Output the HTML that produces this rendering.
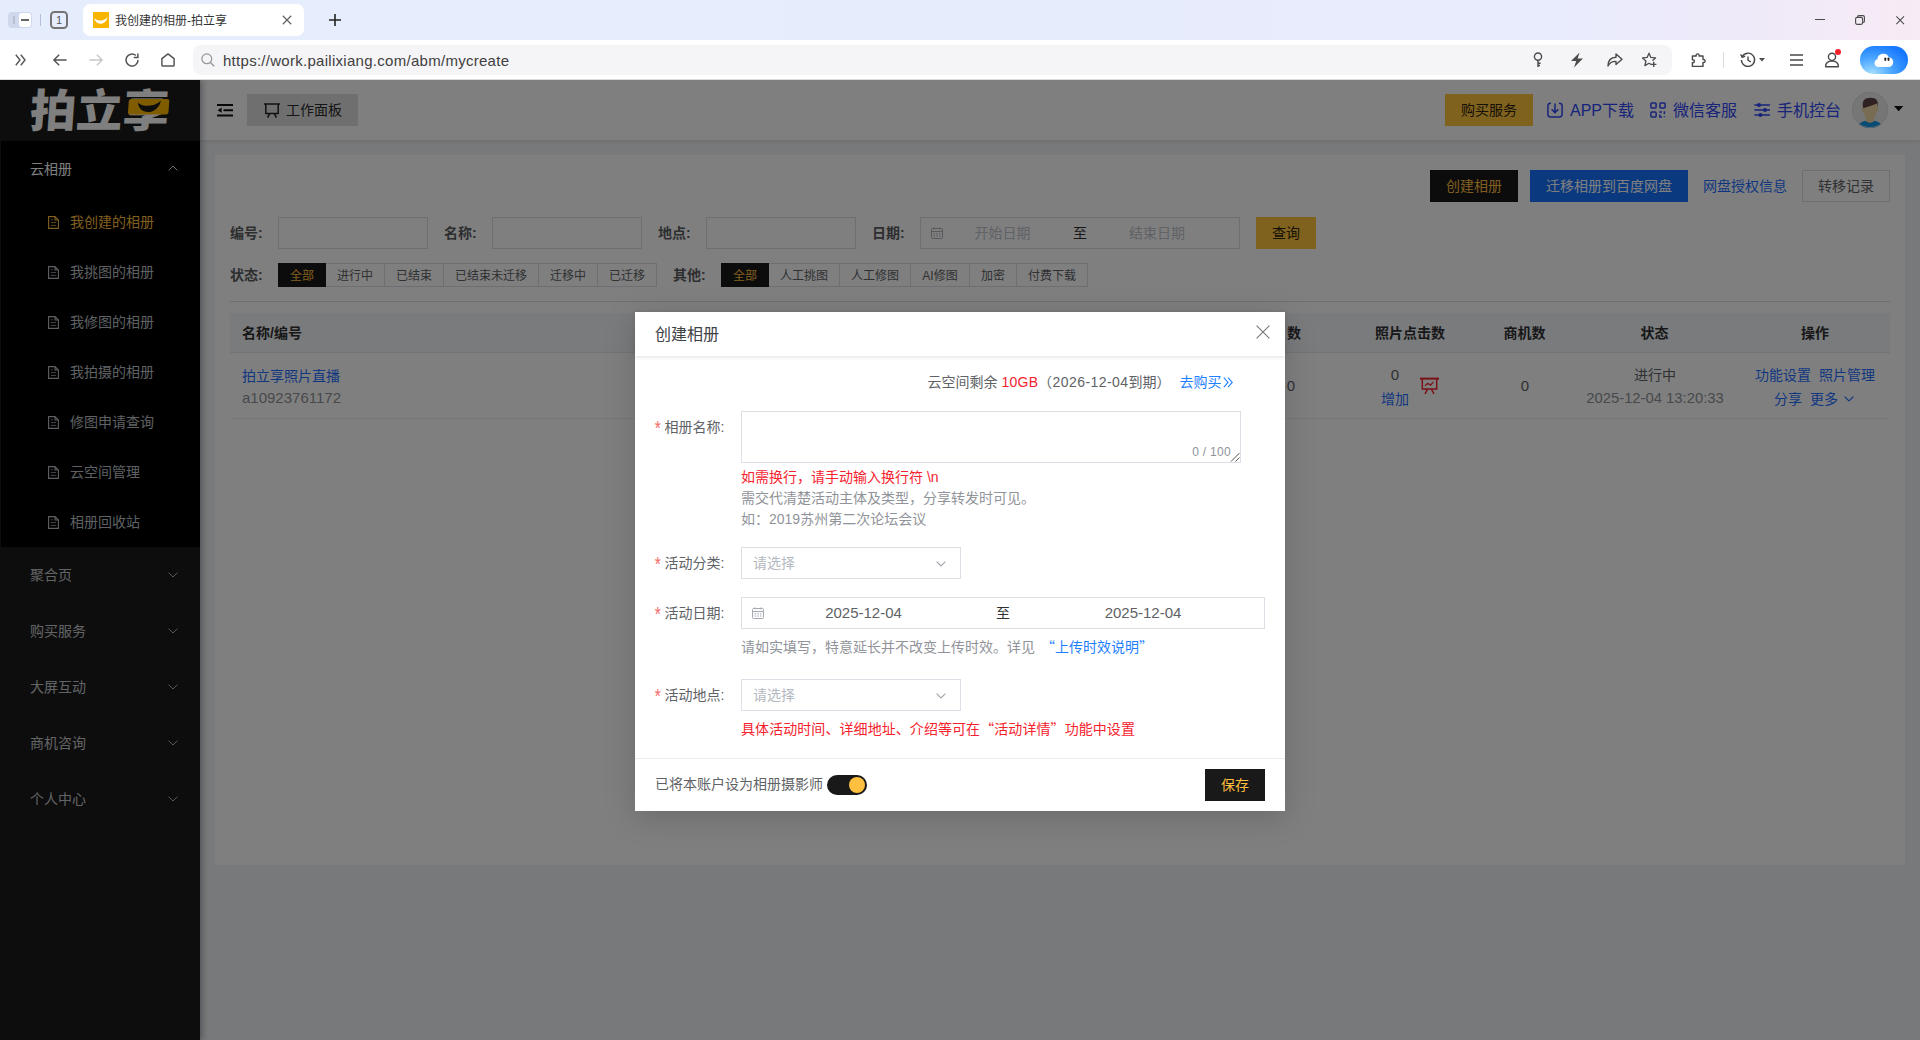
<!DOCTYPE html>
<html lang="zh-CN">
<head>
<meta charset="utf-8">
<title>我创建的相册-拍立享</title>
<style>
*{box-sizing:border-box;margin:0;padding:0}
html,body{width:1920px;height:1040px;overflow:hidden;background:#fff}
body{font-family:"Liberation Sans","Noto Sans CJK SC",sans-serif;font-size:14px;color:#303133;position:relative}
.a{position:absolute}
.t{position:absolute;white-space:nowrap;line-height:20px;height:20px}
.c{transform:translateX(-50%)}
svg{display:block;overflow:visible}
/* browser chrome */
#tabbar{left:0;top:0;width:1920px;height:40px;background:linear-gradient(90deg,#e5edfd 0%,#e8ecfd 80%,#eeeaf9 90%,#f7ebf5 100%)}
#tab{left:83px;top:4px;width:221px;height:32px;background:#fff;border-radius:7px}
#addr{left:0;top:40px;width:1920px;height:40px;background:#fff;border-bottom:1px solid #dcdcdc}
#url{left:193px;top:45px;width:1479px;height:30px;background:#f5f5f7;border-radius:8px}
/* app */
#side{left:0;top:80px;width:200px;height:960px;background:#1a1a1a;box-shadow:2px 0 6px rgba(0,21,41,.35)}
#sub{left:1px;top:141px;width:199px;height:406px;background:#000}
#main{left:200px;top:80px;width:1720px;height:960px;background:#f0f2f5}
#hdr{left:200px;top:80px;width:1720px;height:60px;background:#fff;box-shadow:0 1px 4px rgba(0,21,41,.12)}
#card{left:215px;top:155px;width:1690px;height:710px;background:#fff}
#mask{left:0;top:80px;width:1920px;height:960px;background:rgba(0,0,0,.5)}
.m1{font-size:14px;color:#c6c8cc}
.m2{font-size:14px;color:#bdc1c7}
.lbl{font-weight:bold;color:#5a5c60;font-size:14px}
.inp{position:absolute;height:32px;border:1px solid #dcdfe6;background:#fff}
.rb{position:absolute;top:263px;height:24px;border:1px solid #dcdfe6;border-left:0;font-size:12px;line-height:24px;text-align:center;color:#606266;background:#fff;white-space:nowrap}
.rb.on{background:#191919;color:#ffbf3f;border-color:#191919;border-left:1px solid #191919}
.th{font-weight:bold;color:#303133;font-size:14px}
.lk{color:#1f6fff}
.q{font-family:"Noto Sans CJK SC",sans-serif}
</style>
</head>
<body>
<!-- ===== browser chrome ===== -->
<div class="a" id="tabbar"></div>
<div class="a" id="tab"></div>
<div class="a" id="addr"></div>
<div class="a" id="url"></div>
<!--CHROME_S-->
<!-- left tab-bar controls -->
<div class="a" style="left:8px;top:12.200px;width:23.600px;height:15.400px;border-radius:4px;background:#cfd8ec"></div>
<div class="a" style="left:13px;top:16px;width:2px;height:7.800px;background:#b9c1d5"></div>
<div class="a" style="left:18.800px;top:12.800px;width:12.200px;height:14.200px;border-radius:3px;background:#fff"></div>
<div class="a" style="left:21px;top:19px;width:8px;height:2px;background:#666"></div>
<div class="a" style="left:40px;top:14px;width:1px;height:11.600px;background:#b4c0dc"></div>
<div class="a" style="left:50px;top:11px;width:18px;height:18px;border:2px solid #747474;border-radius:4.500px"></div>
<div class="t" style="left:50px;top:10px;width:18px;text-align:center;font-size:11px;color:#555;font-family:'Liberation Sans',sans-serif">1</div>
<!-- tab -->
<svg class="a" style="left:93px;top:12px" width="16" height="16" viewBox="0 0 16 16"><rect width="16" height="16" fill="#f7b500"/><path d="M1.100 6.100C3.600 9.400 10.800 9.600 14.500 5.200C13.800 9.400 10.600 11.800 7.600 11.750C4.400 11.700 1.600 9.400 1.100 6.100Z" fill="#fff"/></svg>
<div class="t" style="left:115px;top:11px;font-size:12px;color:#333">我创建的相册-拍立享</div>
<svg class="a" style="left:282px;top:15px" width="10" height="10" viewBox="0 0 10 10"><path d="M0.8 0.8L9.2 9.2M9.2 0.8L0.8 9.2" stroke="#666" stroke-width="1.3" fill="none"/></svg>
<svg class="a" style="left:329px;top:14px" width="12" height="12" viewBox="0 0 12 12"><path d="M6 0V12M0 6H12" stroke="#222" stroke-width="1.6" fill="none"/></svg>
<!-- window controls -->
<div class="a" style="left:1815px;top:18.900px;width:10px;height:1px;background:#4a4a4a"></div>
<svg class="a" style="left:1855px;top:15px" width="10" height="10" viewBox="0 0 10 10"><rect x="0.600" y="2.400" width="7" height="7" rx="1.600" fill="none" stroke="#4a4a4a" stroke-width="1.100"/><path d="M2.600 2.200V1.800Q2.600 0.600 3.800 0.600H8Q9.400 0.600 9.400 2V6.200Q9.400 7.400 8.200 7.400H7.800" fill="none" stroke="#4a4a4a" stroke-width="1.100"/></svg>
<svg class="a" style="left:1896px;top:15.600px" width="8.400" height="8.400" viewBox="0 0 9 9"><path d="M0.400 0.400L8.600 8.600M8.600 0.400L0.400 8.600" stroke="#4a4a4a" stroke-width="1.100" fill="none"/></svg>
<!-- nav icons -->
<svg class="a" style="left:15px;top:54px" width="11" height="12" viewBox="0 0 11 12"><path d="M0.8 0.8L5 6L0.8 11.2M5.8 0.8L10 6L5.8 11.2" stroke="#555" stroke-width="1.4" fill="none"/></svg>
<svg class="a" style="left:53px;top:54px" width="14" height="12" viewBox="0 0 14 12"><path d="M6.2 0.7L0.9 6L6.2 11.3M1 6H13.6" stroke="#555" stroke-width="1.5" fill="none"/></svg>
<svg class="a" style="left:89px;top:54px" width="14" height="12" viewBox="0 0 14 12"><path d="M7.8 0.7L13.1 6L7.8 11.3M13 6H0.4" stroke="#c8c8c8" stroke-width="1.5" fill="none"/></svg>
<svg class="a" style="left:125px;top:53px" width="14" height="14" viewBox="0 0 14 14"><path d="M13 7A6 6 0 1 1 10.800 2.400" stroke="#555" stroke-width="1.500" fill="none"/><path d="M12.900 0.400V4.600H8.700" stroke="#555" stroke-width="1.500" fill="none"/></svg>
<svg class="a" style="left:161px;top:53px" width="14" height="14" viewBox="0 0 14 14"><path d="M0.9 5.6L7 0.9L13.1 5.6V12.2Q13.1 13.1 12.2 13.1H1.8Q0.9 13.1 0.9 12.2Z" stroke="#555" stroke-width="1.5" fill="none" stroke-linejoin="round"/></svg>
<svg class="a" style="left:201px;top:53px" width="14" height="14" viewBox="0 0 14 14"><circle cx="5.8" cy="5.8" r="4.9" stroke="#999" stroke-width="1.3" fill="none"/><path d="M9.4 9.4L13.2 13.2" stroke="#999" stroke-width="1.4"/></svg>
<div class="t" style="left:223px;top:50.500px;font-size:15px;color:#404040;letter-spacing:0.28px">https://work.pailixiang.com/abm/mycreate</div>
<!-- right toolbar icons -->
<svg class="a" style="left:1532px;top:52px" width="12" height="16" viewBox="0 0 12 16"><circle cx="6" cy="4.6" r="3.6" stroke="#4c4c4c" stroke-width="1.4" fill="none"/><path d="M6 8.2V15M6 11.2H8.6M6 13.6H8" stroke="#4c4c4c" stroke-width="1.5" fill="none"/></svg>
<svg class="a" style="left:1570px;top:52px" width="14" height="16" viewBox="0 0 14 16"><path d="M9.6 0.4L1 9H6.2L4 15.6L13 6.6H7.6Z" fill="#4c4c4c"/></svg>
<svg class="a" style="left:1607px;top:53px" width="16" height="14" viewBox="0 0 16 14"><path d="M9 0.9L15 6.2L9 11.6V8.4C5 8.2 2.6 9.8 1 13C1 7.8 4 4.4 9 4.2Z" stroke="#4c4c4c" stroke-width="1.4" fill="none" stroke-linejoin="round"/></svg>
<svg class="a" style="left:1641px;top:52px" width="16" height="16" viewBox="0 0 16 16"><path d="M10.200 12.500L8 11.300L3.900 13.600L4.900 9L1.500 5.900L6.100 5.400L8 1.200L9.900 5.400L14.500 5.900L11.900 8.300" stroke="#4c4c4c" stroke-width="1.300" fill="none" stroke-linejoin="round" stroke-linecap="round"/><path d="M12.700 9.700V15.100M10 12.400H15.400" stroke="#4c4c4c" stroke-width="1.400"/></svg>
<svg class="a" style="left:1691px;top:52px" width="16" height="16" viewBox="0 0 16 16"><path d="M1.4 4H5.2C4.4 1.2 8.8 1.2 8 4H12V7.6C14.8 6.8 14.8 11.2 12 10.4V14.4H1.4V10.6C4 11.4 4 7 1.4 7.8Z" stroke="#484848" stroke-width="1.4" fill="none" stroke-linejoin="round"/></svg>
<div class="a" style="left:1723px;top:52px;width:1px;height:16px;background:#ddd"></div>
<svg class="a" style="left:1740px;top:52px" width="16" height="16" viewBox="0 0 16 16"><path d="M2.2 4.6A6.6 6.6 0 1 1 1.4 8" stroke="#484848" stroke-width="1.4" fill="none"/><path d="M0.6 2.4L2.2 5.4L5.2 4.2" stroke="#484848" stroke-width="1.3" fill="none"/><path d="M8 4.4V8.2L10.8 10" stroke="#484848" stroke-width="1.4" fill="none"/></svg>
<svg class="a" style="left:1759px;top:58px" width="6" height="4" viewBox="0 0 6 4"><path d="M0 0H6L3 3.6Z" fill="#4c4c4c"/></svg>
<svg class="a" style="left:1790px;top:54px" width="13" height="12" viewBox="0 0 13 12"><path d="M0 1H13M0 6H13M0 11H13" stroke="#484848" stroke-width="1.4"/></svg>
<svg class="a" style="left:1824px;top:52px" width="16" height="16" viewBox="0 0 16 16"><circle cx="8" cy="4.8" r="3.6" stroke="#484848" stroke-width="1.4" fill="none"/><path d="M1.6 14.8C1.6 10.8 4.2 9 8 9C11.8 9 14.4 10.8 14.4 14.8Z" stroke="#484848" stroke-width="1.4" fill="none" stroke-linejoin="round"/></svg>
<div class="a" style="left:1835px;top:49px;width:6px;height:6px;border-radius:3px;background:#f5222d"></div>
<div class="a" style="left:1860px;top:46px;width:48px;height:28px;border-radius:14px;background:radial-gradient(ellipse at 25% 100%,#a8e0ff 0%,#4aa6ff 40%,#1677ff 80%)"></div>
<svg class="a" style="left:1873px;top:52px" width="22" height="16" viewBox="0 0 22 16"><path d="M5 15A4 4 0 0 1 4.4 7.2A6 6 0 0 1 15.8 5.2A5 5 0 0 1 16.4 15Z" fill="#fff"/><rect x="11.4" y="5.4" width="1.8" height="3.6" rx="0.9" fill="#222"/><rect x="14.6" y="5.4" width="1.8" height="3.6" rx="0.9" fill="#222"/></svg>
<!--CHROME_E-->
<!-- ===== app ===== -->
<div class="a" id="app" style="left:0;top:0;width:1920px;height:1040px;clip-path:inset(80px 0 0 0)">
<div class="a" id="main"></div>
<div class="a" id="card"></div>
<!--CARD_S-->
<div class="a" style="left:1430px;top:170px;width:88px;height:32px;background:#191919"></div>
<div class="t" style="left:1446px;top:175.5px;color:#ffbf3f">创建相册</div>
<div class="a" style="left:1530px;top:170px;width:158px;height:32px;background:#1573ff"></div>
<div class="t" style="left:1546px;top:175.5px;color:#fff">迁移相册到百度网盘</div>
<div class="t lk" style="left:1703px;top:175.5px">网盘授权信息</div>
<div class="a" style="left:1802px;top:170px;width:88px;height:32px;border:1px solid #dcdfe6;background:#fff"></div>
<div class="t" style="left:1818px;top:175.5px;color:#606266">转移记录</div>
<div class="t lbl" style="left:230px;top:223px">编号:</div>
<div class="inp" style="left:278px;top:217px;width:150px"></div>
<div class="t lbl" style="left:444px;top:223px">名称:</div>
<div class="inp" style="left:492px;top:217px;width:150px"></div>
<div class="t lbl" style="left:658px;top:223px">地点:</div>
<div class="inp" style="left:706px;top:217px;width:150px"></div>
<div class="t lbl" style="left:872px;top:223px">日期:</div>
<div class="inp" style="left:920px;top:217px;width:320px"></div>
<svg class="a" style="left:931px;top:227px" width="12" height="12" viewBox="0 0 12 12"><rect x="0.5" y="1.5" width="11" height="10" rx="1" stroke="#aeb2ba" fill="none"/><path d="M0.5 4.500H11.500M3 0.300V2.400M9 0.300V2.400" stroke="#aeb2ba" fill="none"/><path d="M2.500 6.800H4M5.200 6.800H6.800M8 6.800H9.500M2.500 9H4M5.200 9H6.800M8 9H9.500" stroke="#aeb2ba" stroke-width="1"/></svg>
<div class="t c" style="left:1002.5px;top:222.5px;color:#c0c4cc">开始日期</div>
<div class="t c" style="left:1080px;top:222.5px;color:#303133">至</div>
<div class="t c" style="left:1157px;top:222.5px;color:#c0c4cc">结束日期</div>
<div class="a" style="left:1256px;top:217px;width:60px;height:32px;background:#ffc53d"></div>
<div class="t" style="left:1272px;top:222.5px;color:#2b2110">查询</div>
<div class="t lbl" style="left:230px;top:265px">状态:</div>
<div class="rb on" style="left:278px;width:48px">全部</div>
<div class="rb" style="left:326px;width:59px">进行中</div>
<div class="rb" style="left:385px;width:59px">已结束</div>
<div class="rb" style="left:444px;width:95px">已结束未迁移</div>
<div class="rb" style="left:539px;width:59px">迁移中</div>
<div class="rb" style="left:598px;width:59px">已迁移</div>
<div class="t lbl" style="left:673px;top:265px">其他:</div>
<div class="rb on" style="left:721px;width:48px">全部</div>
<div class="rb" style="left:769px;width:71px">人工挑图</div>
<div class="rb" style="left:840px;width:71px">人工修图</div>
<div class="rb" style="left:911px;width:59px">AI修图</div>
<div class="rb" style="left:970px;width:47px">加密</div>
<div class="rb" style="left:1017px;width:71px">付费下载</div>
<div class="a" style="left:230px;top:301px;width:1660px;height:1px;background:#dcdfe6"></div>
<div class="a" style="left:230px;top:313px;width:1660px;height:40px;background:#f5f7fa;border-bottom:1px solid #e6e9f0"></div>
<div class="t th" style="left:242px;top:322.5px">名称/编号</div>
<div class="t th" style="left:1287px;top:322.5px">数</div>
<div class="t th c" style="left:1410px;top:322.5px">照片点击数</div>
<div class="t th c" style="left:1524.5px;top:322.5px">商机数</div>
<div class="t th c" style="left:1654.5px;top:322.5px">状态</div>
<div class="t th c" style="left:1815px;top:322.5px">操作</div>
<div class="a" style="left:230px;top:418px;width:1660px;height:1px;background:#ebeef5"></div>
<div class="t lk" style="left:242px;top:365.5px">拍立享照片直播</div>
<div class="t" style="left:242px;top:388px;color:#909399;font-size:15px">a10923761172</div>
<div class="t c" style="left:1291px;top:376px;color:#606266;font-size:15px">0</div>
<div class="t c" style="left:1395px;top:364.500px;color:#606266;font-size:15px">0</div>
<div class="t c lk" style="left:1395px;top:388.500px">增加</div>
<svg class="a" style="left:1419.700px;top:377.300px" width="19" height="18" viewBox="0 0 19 18"><path d="M0 1.600H19" stroke="#f5222d" stroke-width="2" fill="none"/><path d="M2.300 2V12H16.700V2M7.600 12.200L5 16.800M11.400 12.200L14 16.800" stroke="#f5222d" stroke-width="1.500" fill="none"/><path d="M5 8.800L7.800 6.300L10.600 8.100L13.400 4.900" stroke="#f5222d" stroke-width="1.300" fill="none"/></svg>
<div class="t c" style="left:1525px;top:376px;color:#606266;font-size:15px">0</div>
<div class="t c" style="left:1655px;top:364.500px;color:#606266">进行中</div>
<div class="t c" style="left:1655px;top:388px;color:#909399;font-size:14.800px">2025-12-04 13:20:33</div>
<div class="t lk" style="left:1755px;top:364.500px">功能设置</div>
<div class="t lk" style="left:1819px;top:364.500px">照片管理</div>
<div class="t lk" style="left:1774px;top:388.500px">分享</div>
<div class="t lk" style="left:1810px;top:388.500px">更多</div>
<svg class="a" style="left:1844px;top:396px" width="10" height="6" viewBox="0 0 10 6"><path d="M0.600 0.600L5 5L9.400 0.600" stroke="#1f6fff" stroke-width="1.200" fill="none"/></svg>
<!--CARD_E-->
<div class="a" id="hdr"></div>
<!--HDR_S-->
<!-- fold icon -->
<svg class="a" style="left:217px;top:103.600px" width="16" height="12.400" viewBox="0 0 16 12.400"><path d="M0 1H16M6.500 6.200H16M0 11.400H16" stroke="#111" stroke-width="2"/><path d="M4.600 3.600V8.800L0.600 6.200Z" fill="#111"/></svg>
<div class="a" style="left:247px;top:94px;width:111px;height:32px;background:#dedede"></div>
<svg class="a" style="left:264px;top:103px" width="16" height="15" viewBox="0 0 16 15"><path d="M0 1H16M1.8 1V10.4H14.2V1M5.6 10.6L3.6 14.6M10.4 10.6L12.4 14.6" stroke="#222" stroke-width="1.5" fill="none"/></svg>
<div class="t" style="left:286px;top:99.5px;font-size:14px;color:#2a2a2a">工作面板</div>
<!-- right -->
<div class="a" style="left:1445px;top:94px;width:88px;height:32px;background:#ffc53d"></div>
<div class="t" style="left:1461px;top:99.5px;font-size:14px;color:#2b2110">购买服务</div>
<svg class="a" style="left:1547px;top:102px" width="16" height="16" viewBox="0 0 16 16"><path d="M4 1.2H3.6Q0.9 1.2 0.9 3.8V12.2Q0.9 14.9 3.6 14.9H12.4Q15.1 14.9 15.1 12.2V3.8Q15.1 1.2 12.4 1.2H12" stroke="#3047f5" stroke-width="1.5" fill="none"/><path d="M8 1.6V10.4M4.6 7.2L8 10.6L11.4 7.2" stroke="#3047f5" stroke-width="1.5" fill="none"/></svg>
<div class="t" style="left:1570px;top:100.500px;font-size:16px;color:#3047f5">APP下载</div>
<svg class="a" style="left:1650px;top:102px" width="16" height="16" viewBox="0 0 16 16"><g stroke="#3047f5" stroke-width="1.5" fill="none"><rect x="0.9" y="0.9" width="5.2" height="5.2" rx="1"/><rect x="9.9" y="0.9" width="5.2" height="5.2" rx="1"/><rect x="0.9" y="9.9" width="5.2" height="5.2" rx="1"/><path d="M9.2 10H12M14.4 9.2V12M9.9 12.6V15.1H12M14.4 14.2V15.2"/></g></svg>
<div class="t" style="left:1673px;top:100.500px;font-size:16px;color:#3047f5">微信客服</div>
<svg class="a" style="left:1754px;top:102px" width="16" height="16" viewBox="0 0 16 16"><g stroke="#3047f5" stroke-width="1.5" fill="none"><path d="M0.4 3H16M0.4 8H16M0.4 13H16"/></g><g fill="#3047f5"><circle cx="5" cy="3" r="2"/><circle cx="11" cy="8" r="2"/><circle cx="6.4" cy="13" r="2"/></g></svg>
<div class="t" style="left:1777px;top:100.500px;font-size:16px;color:#3047f5">手机控台</div>
<svg class="a" style="left:1852px;top:92px" width="36" height="36" viewBox="0 0 36 36"><defs><clipPath id="av"><circle cx="18" cy="18" r="18"/></clipPath></defs><g clip-path="url(#av)"><rect width="36" height="36" fill="#ececec"/><path d="M4.500 36C7 30.400 12 28.600 18 28.600C24 28.600 29 30.400 31.500 36Z" fill="#1096e6"/><path d="M10.800 12L25.300 10.500V16C26.500 16 26.500 19.200 25 19.400L22 26.400V29.400L18 31L14 29.400V26.400L11 19.400C9.500 19.200 9.500 16 10.800 16Z" fill="#f0d8a4"/><path d="M11.200 16.200C9.400 8.600 12.600 5.700 18.600 5.700C24.400 5.700 26.800 8.800 25.600 15.400C25.500 13.600 25.300 12.400 24.800 11.400C20 13.800 15 14.600 11.200 16.200Z" fill="#604444"/></g><circle cx="18" cy="18" r="17.600" fill="none" stroke="#d8dde3" stroke-width="0.800"/></svg>
<svg class="a" style="left:1894.300px;top:106px" width="9.300" height="5.200" viewBox="0 0 9.300 5.200"><path d="M0 0H9.300L4.650 5.200Z" fill="#111"/></svg>
<!--HDR_E-->
<div class="a" id="side"></div>
<div class="a" id="sub"></div>
<!--SIDE_S-->
<!-- logo -->
<div class="a" id="logo" style="left:30px;top:87px;width:140px;height:50px;transform:skewX(-4deg)">
  <div class="t" style="left:0;top:0;height:50px;line-height:50px;font-size:45px;font-weight:900;color:#fff;transform-origin:0 50%;transform:scaleX(1.03)">拍立享</div>
  <svg class="a" style="left:97.500px;top:11.500px" width="40.500" height="15.600" viewBox="0 0 41 17" preserveAspectRatio="none"><rect width="41" height="17" rx="2.5" fill="#ffb800"/><path d="M9.5 3.6C12 8.6 26 9.4 32.6 1.8C31.4 10.4 24.6 14.8 19.4 14.2C13.6 13.6 9.6 8.8 9.5 3.6Z" fill="#1a1a1a"/></svg>
</div>
<!-- menu -->
<div class="t m1" style="left:30px;top:158.5px;color:#fff">云相册</div>
<svg class="a" style="left:168px;top:165px" width="10" height="6" viewBox="0 0 10 6"><path d="M0.6 5.4L5 1L9.4 5.4" stroke="#ddd" stroke-width="1" fill="none"/></svg>
<svg class="a" style="left:48px;top:215.5px" width="11" height="13" viewBox="0 0 11 13"><path d="M0.6 0.6H7L10.4 4V12.4H0.6Z M7 0.6V4H10.4" stroke="#ffbf3f" stroke-width="1.1" fill="none"/><path d="M2.800 6.600H8.200M2.800 9.400H8.200M2.800 3.800H4.800" opacity="0.750" stroke="#ffbf3f" stroke-width="1"/></svg>
<div class="t m2" style="left:70px;top:212.0px;color:#ffbf3f">我创建的相册</div>
<svg class="a" style="left:48px;top:265.5px" width="11" height="13" viewBox="0 0 11 13"><path d="M0.6 0.6H7L10.4 4V12.4H0.6Z M7 0.6V4H10.4" stroke="#bdc1c7" stroke-width="1.1" fill="none"/><path d="M2.800 6.600H8.200M2.800 9.400H8.200M2.800 3.800H4.800" opacity="0.750" stroke="#bdc1c7" stroke-width="1"/></svg>
<div class="t m2" style="left:70px;top:262.0px;color:#bdc1c7">我挑图的相册</div>
<svg class="a" style="left:48px;top:315.5px" width="11" height="13" viewBox="0 0 11 13"><path d="M0.6 0.6H7L10.4 4V12.4H0.6Z M7 0.6V4H10.4" stroke="#bdc1c7" stroke-width="1.1" fill="none"/><path d="M2.800 6.600H8.200M2.800 9.400H8.200M2.800 3.800H4.800" opacity="0.750" stroke="#bdc1c7" stroke-width="1"/></svg>
<div class="t m2" style="left:70px;top:312.0px;color:#bdc1c7">我修图的相册</div>
<svg class="a" style="left:48px;top:365.5px" width="11" height="13" viewBox="0 0 11 13"><path d="M0.6 0.6H7L10.4 4V12.4H0.6Z M7 0.6V4H10.4" stroke="#bdc1c7" stroke-width="1.1" fill="none"/><path d="M2.800 6.600H8.200M2.800 9.400H8.200M2.800 3.800H4.800" opacity="0.750" stroke="#bdc1c7" stroke-width="1"/></svg>
<div class="t m2" style="left:70px;top:362.0px;color:#bdc1c7">我拍摄的相册</div>
<svg class="a" style="left:48px;top:415.5px" width="11" height="13" viewBox="0 0 11 13"><path d="M0.6 0.6H7L10.4 4V12.4H0.6Z M7 0.6V4H10.4" stroke="#bdc1c7" stroke-width="1.1" fill="none"/><path d="M2.800 6.600H8.200M2.800 9.400H8.200M2.800 3.800H4.800" opacity="0.750" stroke="#bdc1c7" stroke-width="1"/></svg>
<div class="t m2" style="left:70px;top:412.0px;color:#bdc1c7">修图申请查询</div>
<svg class="a" style="left:48px;top:465.5px" width="11" height="13" viewBox="0 0 11 13"><path d="M0.6 0.6H7L10.4 4V12.4H0.6Z M7 0.6V4H10.4" stroke="#bdc1c7" stroke-width="1.1" fill="none"/><path d="M2.800 6.600H8.200M2.800 9.400H8.200M2.800 3.800H4.800" opacity="0.750" stroke="#bdc1c7" stroke-width="1"/></svg>
<div class="t m2" style="left:70px;top:462.0px;color:#bdc1c7">云空间管理</div>
<svg class="a" style="left:48px;top:515.5px" width="11" height="13" viewBox="0 0 11 13"><path d="M0.6 0.6H7L10.4 4V12.4H0.6Z M7 0.6V4H10.4" stroke="#bdc1c7" stroke-width="1.1" fill="none"/><path d="M2.800 6.600H8.200M2.800 9.400H8.200M2.800 3.800H4.800" opacity="0.750" stroke="#bdc1c7" stroke-width="1"/></svg>
<div class="t m2" style="left:70px;top:512.0px;color:#bdc1c7">相册回收站</div>
<div class="t m1" style="left:30px;top:564.5px">聚合页</div>
<svg class="a" style="left:168px;top:572px" width="10" height="6" viewBox="0 0 10 6"><path d="M0.6 0.6L5 5L9.4 0.6" stroke="#b0b3b8" stroke-width="1" fill="none"/></svg>
<div class="t m1" style="left:30px;top:620.5px">购买服务</div>
<svg class="a" style="left:168px;top:628px" width="10" height="6" viewBox="0 0 10 6"><path d="M0.6 0.6L5 5L9.4 0.6" stroke="#b0b3b8" stroke-width="1" fill="none"/></svg>
<div class="t m1" style="left:30px;top:676.5px">大屏互动</div>
<svg class="a" style="left:168px;top:684px" width="10" height="6" viewBox="0 0 10 6"><path d="M0.6 0.6L5 5L9.4 0.6" stroke="#b0b3b8" stroke-width="1" fill="none"/></svg>
<div class="t m1" style="left:30px;top:732.5px">商机咨询</div>
<svg class="a" style="left:168px;top:740px" width="10" height="6" viewBox="0 0 10 6"><path d="M0.6 0.6L5 5L9.4 0.6" stroke="#b0b3b8" stroke-width="1" fill="none"/></svg>
<div class="t m1" style="left:30px;top:788.5px">个人中心</div>
<svg class="a" style="left:168px;top:796px" width="10" height="6" viewBox="0 0 10 6"><path d="M0.6 0.6L5 5L9.4 0.6" stroke="#b0b3b8" stroke-width="1" fill="none"/></svg>
<!--SIDE_E-->
<div class="a" id="mask"></div>
<!--MODAL_S-->
<div class="a" style="left:635px;top:312px;width:650px;height:499px;background:#fff;box-shadow:0 6px 30px rgba(0,0,0,.17)"></div>
<div class="a" style="left:635px;top:312px;width:650px;height:44px;background:#fff;box-shadow:0 1px 4px rgba(0,0,0,.13)"></div>
<div class="t" style="left:655px;top:324px;font-size:16px;line-height:22px;height:22px;color:#404246">创建相册</div>
<svg class="a" style="left:1256px;top:325px" width="14" height="14" viewBox="0 0 14 14"><path d="M0.600 0.600L13.400 13.400M13.400 0.600L0.600 13.400" stroke="#777" stroke-width="1.100" fill="none"/></svg>
<div class="t" style="left:927.500px;top:371.500px;color:#606266">云空间剩余 <span style="color:#f5222d;letter-spacing:0.3px">10GB</span></div>
<div class="t" style="left:1038px;top:371.500px;color:#606266;width:128px;text-align:center"><span style="letter-spacing:0.45px">（2026-12-04</span>到期）</div>
<div class="t" style="left:1179.500px;top:371.500px;color:#1e80ff">去购买</div>
<svg class="a" style="left:1223px;top:376.600px" width="10" height="10.800" viewBox="0 0 10 10" preserveAspectRatio="none"><path d="M0.800 0.600L5 5L0.800 9.400M5 0.600L9.200 5L5 9.400" stroke="#1e80ff" stroke-width="1.100" fill="none"/></svg>
<div class="t" style="left:655px;top:416.5px;color:#606266"><span style="color:#f56c6c;margin-right:4px;display:inline-block;transform:scale(1.12,1.5)">*</span>相册名称:</div>
<div class="a" style="left:741px;top:411px;width:500px;height:52px;border:1px solid #dcdfe6;background:#fff"></div>
<div class="t" style="left:1161px;top:442px;width:70px;text-align:right;font-size:12px;color:#909399;letter-spacing:0.300px">0 / 100</div>
<svg class="a" style="left:1230px;top:452px" width="10" height="10" viewBox="0 0 10 10"><path d="M9.500 1L1 9.500M9.500 5.500L5.500 9.500" stroke="#555" stroke-width="1"/></svg>
<div class="t" style="left:741px;top:467px;color:#f5222d">如需换行，请手动输入换行符 \n</div>
<div class="t" style="left:741px;top:488px;color:#909399">需交代清楚活动主体及类型，分享转发时可见。</div>
<div class="t" style="left:741px;top:509px;color:#909399">如：2019苏州第二次论坛会议</div>
<div class="t" style="left:655px;top:552.5px;color:#606266"><span style="color:#f56c6c;margin-right:4px;display:inline-block;transform:scale(1.12,1.5)">*</span>活动分类:</div>
<div class="a" style="left:741px;top:547px;width:220px;height:32px;border:1px solid #dcdfe6;background:#fff"></div>
<div class="t" style="left:753px;top:552.5px;color:#b4b8bf">请选择</div>
<svg class="a" style="left:936px;top:560.5px" width="10" height="6" viewBox="0 0 10 6"><path d="M0.600 0.600L5 5L9.400 0.600" stroke="#a0a4ab" stroke-width="1.100" fill="none"/></svg>
<div class="t" style="left:655px;top:602.5px;color:#606266"><span style="color:#f56c6c;margin-right:4px;display:inline-block;transform:scale(1.12,1.5)">*</span>活动日期:</div>
<div class="a" style="left:741px;top:597px;width:524px;height:32px;border:1px solid #dcdfe6;background:#fff"></div>
<svg class="a" style="left:752px;top:607px" width="12" height="12" viewBox="0 0 12 12"><rect x="0.5" y="1.5" width="11" height="10" rx="1" stroke="#a4a8b0" fill="none"/><path d="M0.5 4.500H11.500M3 0.300V2.400M9 0.300V2.400" stroke="#a4a8b0" fill="none"/><path d="M2.500 6.800H4M5.200 6.800H6.800M8 6.800H9.500M2.500 9H4M5.200 9H6.800M8 9H9.500" stroke="#a4a8b0" stroke-width="1"/></svg>
<div class="t c" style="left:863.500px;top:602.500px;color:#606266;font-size:15px">2025-12-04</div>
<div class="t c" style="left:1003px;top:602.500px;color:#303133">至</div>
<div class="t c" style="left:1143px;top:602.500px;color:#606266;font-size:15px">2025-12-04</div>
<div class="t" style="left:741px;top:636px;color:#909399">请如实填写，特意延长并不改变上传时效。详见 <span style="color:#1e80ff;margin-left:2px"><span class="q">“</span>上传时效说明<span class="q">”</span></span></div>
<div class="t" style="left:655px;top:684.5px;color:#606266"><span style="color:#f56c6c;margin-right:4px;display:inline-block;transform:scale(1.12,1.5)">*</span>活动地点:</div>
<div class="a" style="left:741px;top:679px;width:220px;height:32px;border:1px solid #dcdfe6;background:#fff"></div>
<div class="t" style="left:753px;top:684.5px;color:#b4b8bf">请选择</div>
<svg class="a" style="left:936px;top:692.5px" width="10" height="6" viewBox="0 0 10 6"><path d="M0.600 0.600L5 5L9.400 0.600" stroke="#a0a4ab" stroke-width="1.100" fill="none"/></svg>
<div class="t" style="left:741px;top:718px;color:#f5222d;letter-spacing:0.07px">具体活动时间、详细地址、介绍等可在<span class="q">“</span>活动详情<span class="q">”</span>功能中设置</div>
<div class="a" style="left:635px;top:758px;width:650px;height:1px;background:#ececec"></div>
<div class="t" style="left:655px;top:774px;color:#606266">已将本账户设为相册摄影师</div>
<div class="a" style="left:827px;top:775px;width:40px;height:20px;border-radius:10px;background:#191919"></div>
<div class="a" style="left:848.500px;top:777px;width:16px;height:16px;border-radius:8px;background:#ffbf3f"></div>
<div class="a" style="left:1205px;top:769px;width:60px;height:32px;background:#191919"></div>
<div class="t" style="left:1221px;top:774.500px;color:#ffbf3f">保存</div>
<!--MODAL_E-->
</div>
</body>
</html>
